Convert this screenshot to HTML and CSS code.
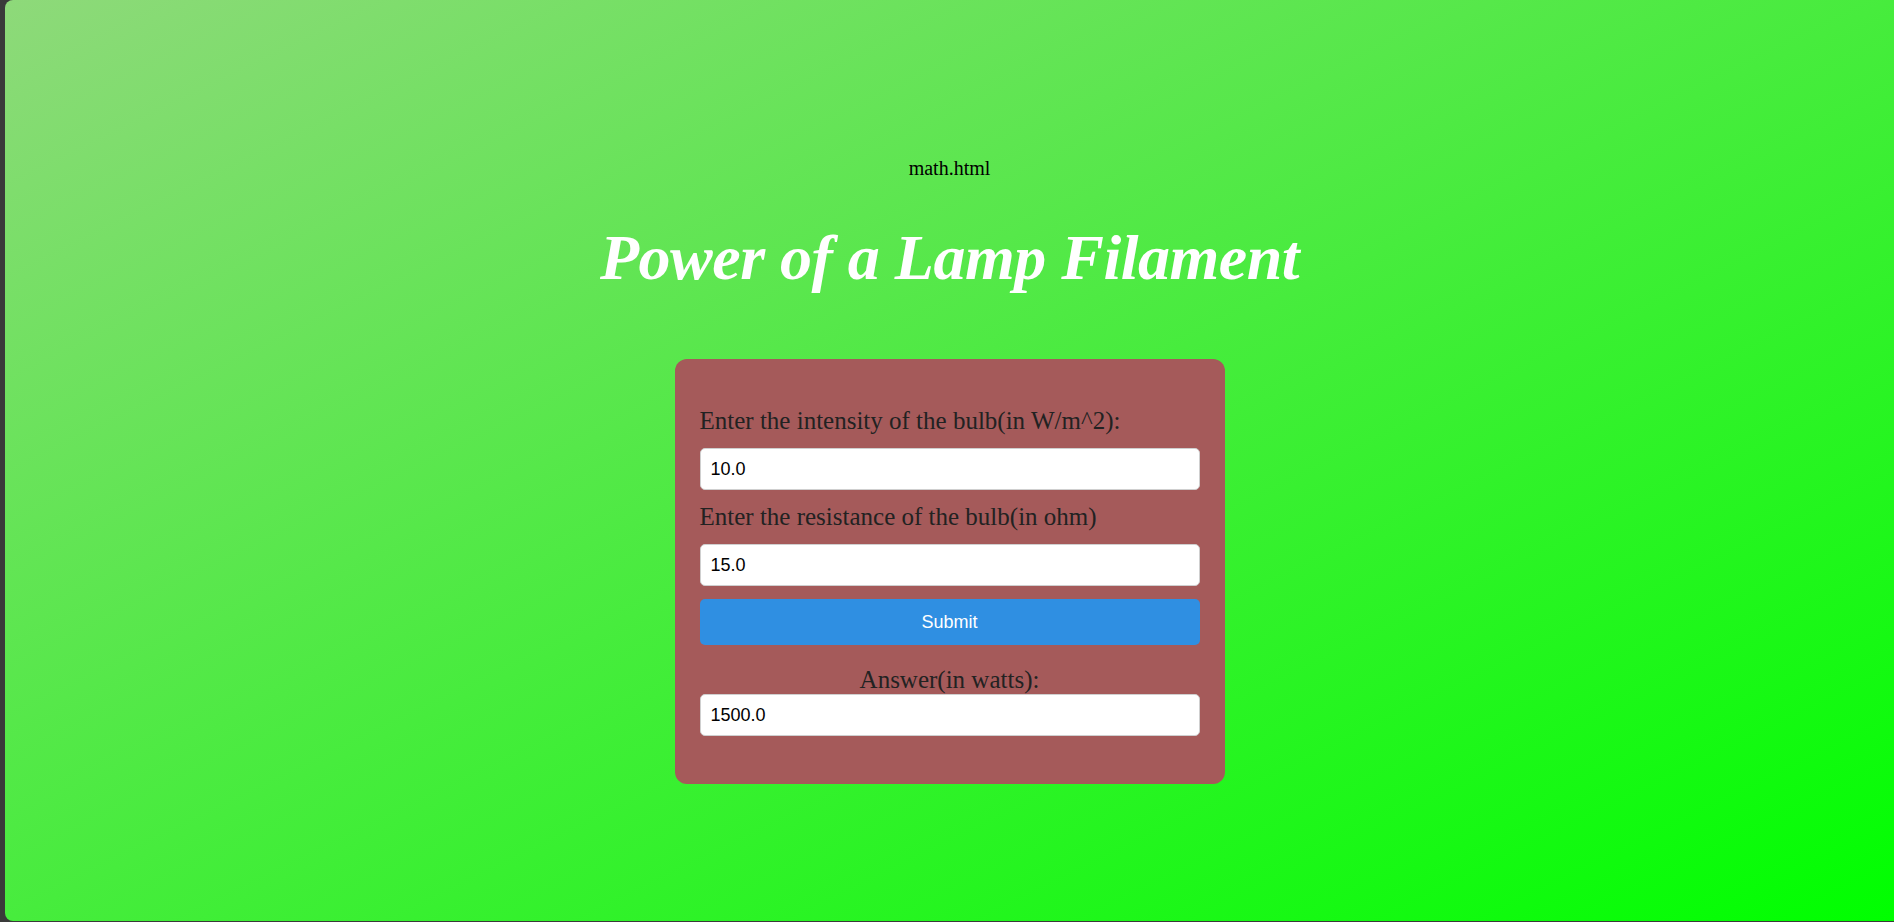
FILE: index.html
```html
<!DOCTYPE html>
<html lang="en">
<head>
<meta charset="utf-8">
<title>Power of a Lamp Filament</title>
<link rel="stylesheet" href="styles.css">
</head>
<body>
  <main class="panel">
    <p class="file-name">math.html</p>
    <h1 class="title">Power of a Lamp Filament</h1>
    <form class="card">
      <label class="field-label" for="intensity">Enter the intensity of the bulb(in W/m^2):</label>
      <input class="field-input" id="intensity" type="text" value="10.0">
      <label class="field-label" for="resistance">Enter the resistance of the bulb(in ohm)</label>
      <input class="field-input" id="resistance" type="text" value="15.0">
      <button class="submit-btn" type="button">Submit</button>
      <label class="field-label answer-label" for="answer">Answer(in watts):</label>
      <input class="field-input" id="answer" type="text" value="1500.0">
    </form>
  </main>
</body>
</html>
```

FILE: styles.css
```css
html, body {
  margin: 0;
  padding: 0;
}

body {
  background: #3a3a3a;
  width: 1894px;
  height: 922px;
  overflow: hidden;
  display: flex;
  align-items: flex-start;
}

.panel {
  margin-left: 5px;
  width: 1889px;
  height: 921px;
  border-radius: 8px 0 0 8px;
  background: linear-gradient(to bottom right, #8ed97a, #00ff00);
  display: flex;
  flex-direction: column;
  align-items: center;
  box-sizing: border-box;
  padding-top: 157px;
  font-family: "Liberation Serif", "Times New Roman", serif;
}

.file-name {
  margin: 0;
  font-size: 20px;
  line-height: 23px;
  color: #000;
}

.title {
  margin: 41px 0 0;
  font-size: 64px;
  line-height: 74px;
  font-weight: bold;
  font-style: italic;
  letter-spacing: -0.5px;
  color: #fff;
}

.card {
  margin-top: 64px;
  width: 550px;
  box-sizing: border-box;
  padding: 48px 25px 48px;
  background: #a55a5a;
  border-radius: 12px;
  display: flex;
  flex-direction: column;
}

.field-label {
  font-size: 25px;
  line-height: 28px;
  color: #222;
  margin-bottom: 13px;
}

.answer-label {
  text-align: center;
  margin-top: 8px;
  margin-bottom: 0;
}

.field-input {
  height: 42px;
  box-sizing: border-box;
  padding: 0 10px;
  border: 1px solid #cfcfcf;
  border-radius: 5px;
  background: #fff;
  font-family: "Liberation Sans", Arial, sans-serif;
  font-size: 18px;
  color: #000;
  margin: 0 0 13px;
}

.field-input:last-child {
  margin-bottom: 0;
}

.submit-btn {
  height: 46px;
  border: none;
  border-radius: 5px;
  background: #2f8fe2;
  color: #fff;
  font-family: "Liberation Sans", Arial, sans-serif;
  font-size: 18px;
  margin: 0 0 13px;
  padding: 0;
}
```
